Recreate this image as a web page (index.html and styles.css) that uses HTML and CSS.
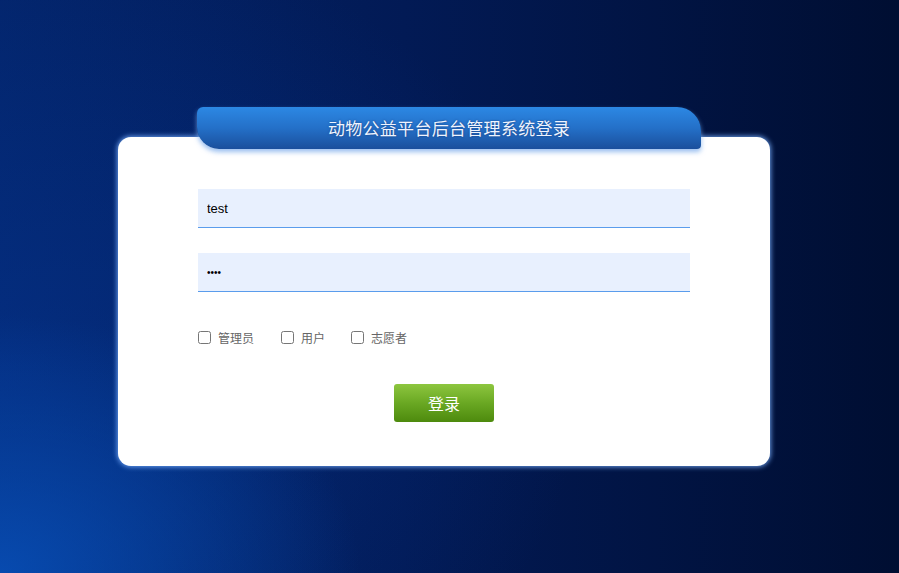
FILE: index.html
```html
<!DOCTYPE html>
<html lang="zh-CN">
<head>
<meta charset="utf-8">
<title>动物公益平台后台管理系统登录</title>
<link rel="stylesheet" href="styles.css">
</head>
<body>
<div class="page">
  <div class="login">
    <div class="tab">动物公益平台后台管理系统登录</div>
    <div class="card">
      <form class="form">
        <input class="field" type="text" value="test">
        <input class="field" type="password" value="test">
        <div class="roles">
          <label class="role"><input type="checkbox" class="box"><span>管理员</span></label>
          <label class="role"><input type="checkbox" class="box"><span>用户</span></label>
          <label class="role"><input type="checkbox" class="box"><span>志愿者</span></label>
        </div>
        <div class="actions">
          <button type="button" class="btn">登录</button>
        </div>
      </form>
    </div>
  </div>
</div>
</body>
</html>
```

FILE: styles.css
```css
html, body {
  margin: 0;
  padding: 0;
  height: 100%;
}
body {
  font-family: "Liberation Sans", "Noto Sans CJK SC", sans-serif;
  background:
    radial-gradient(ellipse 40% 45% at 0% 100%, rgba(8, 80, 185, 0.85) 0%, rgba(8, 70, 170, 0) 100%),
    radial-gradient(ellipse 65% 80% at 0% 65%, rgba(5, 55, 150, 0.5) 0%, rgba(5, 55, 150, 0) 100%),
    linear-gradient(to right, #03246a 0%, #021a55 45%, #000e32 100%);
  overflow: hidden;
}
.page {
  height: 573px;
  padding-top: 107px;
  box-sizing: border-box;
}
.login {
  width: 652px;
  margin-left: 118px;
  display: flex;
  flex-direction: column;
}
.tab {
  position: relative;
  z-index: 2;
  margin-left: 79px;
  width: 504px;
  height: 42px;
  box-sizing: border-box;
  border-radius: 6px 24px 4px 22px;
  background: linear-gradient(to bottom, #2c88e4 0%, #2470c8 50%, #1a4f9c 100%);
  box-shadow: 0 3px 5px rgba(120, 170, 235, 0.75);
  color: #eef4ff;
  font-family: "Noto Sans CJK SC", sans-serif;
  font-size: 17px;
  line-height: 42px;
  text-align: center;
  letter-spacing: 0.3px;
  text-shadow: 0 0 2px rgba(20, 50, 110, 0.8);
}
.card {
  margin-top: -12px;
  height: 329px;
  box-sizing: border-box;
  background: #ffffff;
  border-radius: 13px;
  box-shadow: 0 0 5px 1px rgba(120, 175, 255, 0.85);
  padding: 52px 80px 0 80px;
}
.form {
  display: flex;
  flex-direction: column;
}
.field {
  height: 39px;
  box-sizing: border-box;
  margin: 0 0 25px 0;
  padding: 0 9px 1px 9px;
  border: 0;
  box-shadow: inset 0 -1px 0 #5a9cec;
  background: #e8f0fe;
  font-family: "Liberation Sans", sans-serif;
  font-size: 13px;
  color: #000;
  outline: none;
}
.field[type="password"] {
  font-size: 10px;
}
.roles {
  display: flex;
  align-items: center;
  margin-top: 10px;
  height: 20px;
}
.role {
  display: flex;
  align-items: center;
  font-family: "Noto Sans CJK SC", sans-serif;
  font-size: 12px;
  color: #666;
  margin-right: 27px;
}
.role:nth-child(2) {
  margin-right: 26px;
}
.box {
  margin: 0 7px 0 0;
  width: 13px;
  height: 13px;
}
.actions {
  display: flex;
  justify-content: center;
  margin-top: 37px;
}
.btn {
  width: 100px;
  height: 38px;
  border: none;
  border-radius: 3px;
  background: linear-gradient(to bottom, #8dc63f 0%, #6aa823 50%, #4d8a0d 100%);
  color: #fff;
  font-family: "Noto Sans CJK SC", sans-serif;
  font-size: 16px;
  padding: 0;
}
```
